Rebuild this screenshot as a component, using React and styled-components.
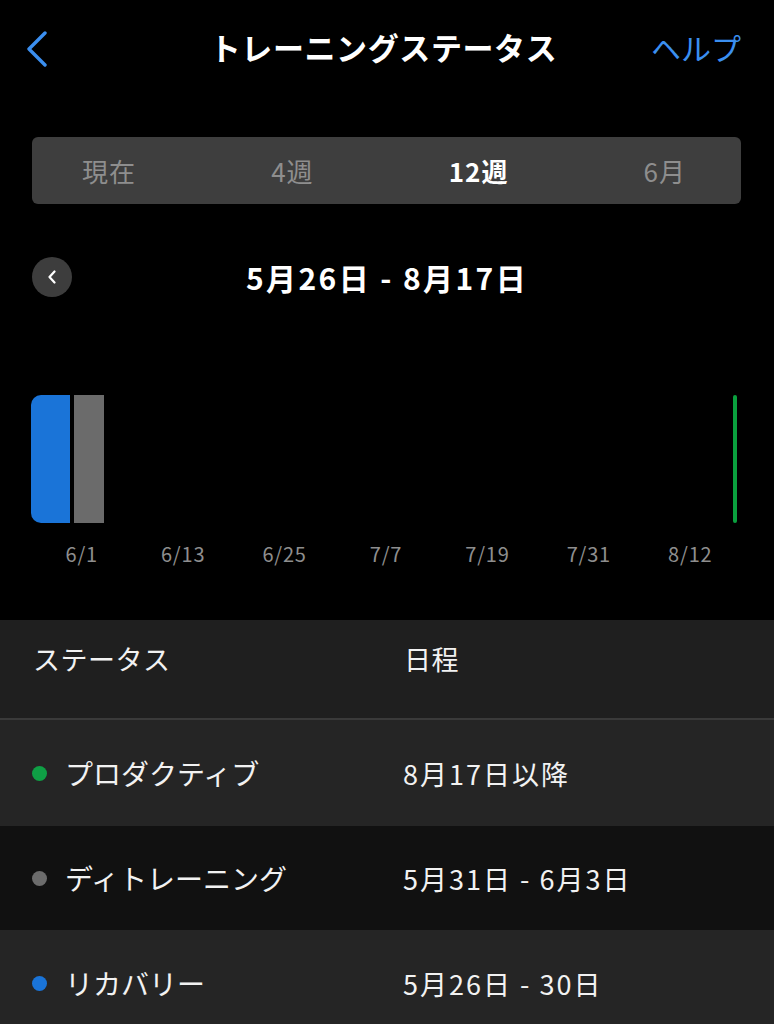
import React from "react";
import styled, { createGlobalStyle } from "styled-components";

const GlobalStyle = createGlobalStyle`
  html, body {
    margin: 0;
    padding: 0;
    background: #000;
    overflow: hidden;
  }
  body {
    font-family: "Noto Sans CJK JP", "Noto Sans", sans-serif;
    color: #fff;
  }
`;

const segments = ["現在", "4週", "12週", "6月"];
const ticks = ["6/1", "6/13", "6/25", "7/7", "7/19", "7/31", "8/12"];
const statuses = [
  { name: "プロダクティブ", dot: "#0f9f45", when: "8月17日以降", tone: "light" },
  { name: "ディトレーニング", dot: "#6c6c6c", when: "5月31日 - 6月3日", tone: "dark" },
  { name: "リカバリー", dot: "#1a74d8", when: "5月26日 - 30日", tone: "light" },
];

function App() {
  return (
    <Screen>
      <GlobalStyle />
      <Header>
        <BackButton aria-label="戻る">
          <svg width="22" height="36" viewBox="0 0 22 36">
            <polyline
              points="19,2 3,18 19,34"
              fill="none"
              stroke="#3b8ff0"
              strokeWidth="3.4"
              strokeLinecap="round"
              strokeLinejoin="round"
            />
          </svg>
        </BackButton>
        <Title>トレーニングステータス</Title>
        <HelpLink>ヘルプ</HelpLink>
      </Header>

      <Segmented>
        {segments.map((s) => (
          <Segment key={s} active={s === "12週"}>
            {s}
          </Segment>
        ))}
      </Segmented>

      <RangeRow>
        <RoundButton aria-label="前へ">
          <svg width="10" height="14" viewBox="0 0 10 14">
            <polyline
              points="7.5,1.5 2.5,7 7.5,12.5"
              fill="none"
              stroke="#fff"
              strokeWidth="2.2"
              strokeLinecap="round"
              strokeLinejoin="round"
            />
          </svg>
        </RoundButton>
        <RangeText>5月26日 - 8月17日</RangeText>
        <RangeSpacer />
      </RangeRow>

      <Chart>
        <Bars>
          <Bar color="#1a74d8" w={39} roundLeft />
          <Bar color="#6b6b6b" w={30} />
          <BarSpacer />
          <Marker />
        </Bars>
        <Axis>
          {ticks.map((t) => (
            <Tick key={t}>{t}</Tick>
          ))}
        </Axis>
      </Chart>

      <Table>
        <HeadRow>
          <HeadCell>ステータス</HeadCell>
          <HeadCell>日程</HeadCell>
        </HeadRow>
        {statuses.map((s) => (
          <Row key={s.name} tone={s.tone}>
            <NameCell>
              <Dot color={s.dot} />
              {s.name}
            </NameCell>
            <DateCell>{s.when}</DateCell>
          </Row>
        ))}
      </Table>
    </Screen>
  );
}

export default App;

const Screen = styled.div`
  width: 774px;
  height: 1024px;
  background: #000;
  overflow: hidden;
`;

const Header = styled.div`
  height: 96px;
  display: flex;
  align-items: center;
  justify-content: space-between;
  padding: 0 33px 0 26px;
`;

const BackButton = styled.div`
  width: 92px;
  display: flex;
  align-items: center;
  padding-top: 2px;
`;

const Title = styled.div`
  font-size: 31px;
  font-weight: 700;
  color: #fff;
  letter-spacing: 0.6px;
  margin-top: -3px;
`;

const HelpLink = styled.div`
  width: 92px;
  text-align: right;
  font-size: 30px;
  color: #3b8ff0;
  margin-top: -3px;
`;

const Segmented = styled.div`
  margin: 41px 33px 0 32px;
  height: 67px;
  border-radius: 6px;
  background: #3e3e3e;
  display: flex;
  align-items: center;
  justify-content: space-between;
  padding: 0 55px 0 50px;
`;

const Segment = styled.div`
  font-size: 26px;
  letter-spacing: 1px;
  color: ${(p) => (p.active ? "#fff" : "#8e8e8e")};
  font-weight: ${(p) => (p.active ? 700 : 400)};
`;

const RangeRow = styled.div`
  margin: 53px 32px 0 32px;
  height: 40px;
  display: flex;
  align-items: center;
`;

const RoundButton = styled.div`
  width: 40px;
  height: 40px;
  border-radius: 50%;
  background: #3d3d3d;
  display: flex;
  align-items: center;
  justify-content: center;
`;

const RangeText = styled.div`
  flex: 1;
  text-align: center;
  font-size: 30px;
  font-weight: 700;
  letter-spacing: 2.4px;
`;

const RangeSpacer = styled.div`
  width: 40px;
`;

const Chart = styled.div`
  margin: 98px 33px 0 31px;
  height: 225px;
`;

const Bars = styled.div`
  height: 128px;
  display: flex;
  gap: 4px;
`;

const Bar = styled.div`
  width: ${(p) => p.w}px;
  background: ${(p) => p.color};
  border-radius: ${(p) => (p.roundLeft ? "10px 0 0 10px" : "0")};
`;

const BarSpacer = styled.div`
  flex: 1;
`;

const Marker = styled.div`
  width: 4px;
  margin-right: 4px;
  background: #0aa03e;
  border-radius: 2px;
`;

const Axis = styled.div`
  margin-top: 19px;
  display: grid;
  grid-template-columns: repeat(7, 1fr);
`;

const Tick = styled.div`
  text-align: center;
  font-size: 20px;
  letter-spacing: 0.8px;
  color: #8e8e8e;
  line-height: 24px;
`;

const Table = styled.div`
  display: flex;
  flex-direction: column;
`;

const HeadRow = styled.div`
  height: 100px;
  background: #1f1f1f;
  border-bottom: 2px solid #3a3a3a;
  display: grid;
  grid-template-columns: 371px 1fr;
  padding: 19px 0 0 33px;
  box-sizing: border-box;
`;

const HeadCell = styled.div`
  font-size: 27px;
  line-height: 40px;
  color: #f2f2f2;
  letter-spacing: 0.5px;
`;

const Row = styled.div`
  height: ${(p) => (p.tone === "dark" ? 104 : 106)}px;
  background: ${(p) => (p.tone === "dark" ? "#111111" : "#252525")};
  display: grid;
  grid-template-columns: 371px 1fr;
  align-items: center;
  padding-left: 32px;
  box-sizing: border-box;
`;

const NameCell = styled.div`
  display: flex;
  align-items: center;
  gap: 18px;
  font-size: 28px;
  color: #f2f2f2;
`;

const Dot = styled.span`
  width: 15px;
  height: 15px;
  border-radius: 50%;
  background: ${(p) => p.color};
  flex-shrink: 0;
`;

const DateCell = styled.div`
  font-size: 27px;
  color: #f2f2f2;
  letter-spacing: 2px;
`;
